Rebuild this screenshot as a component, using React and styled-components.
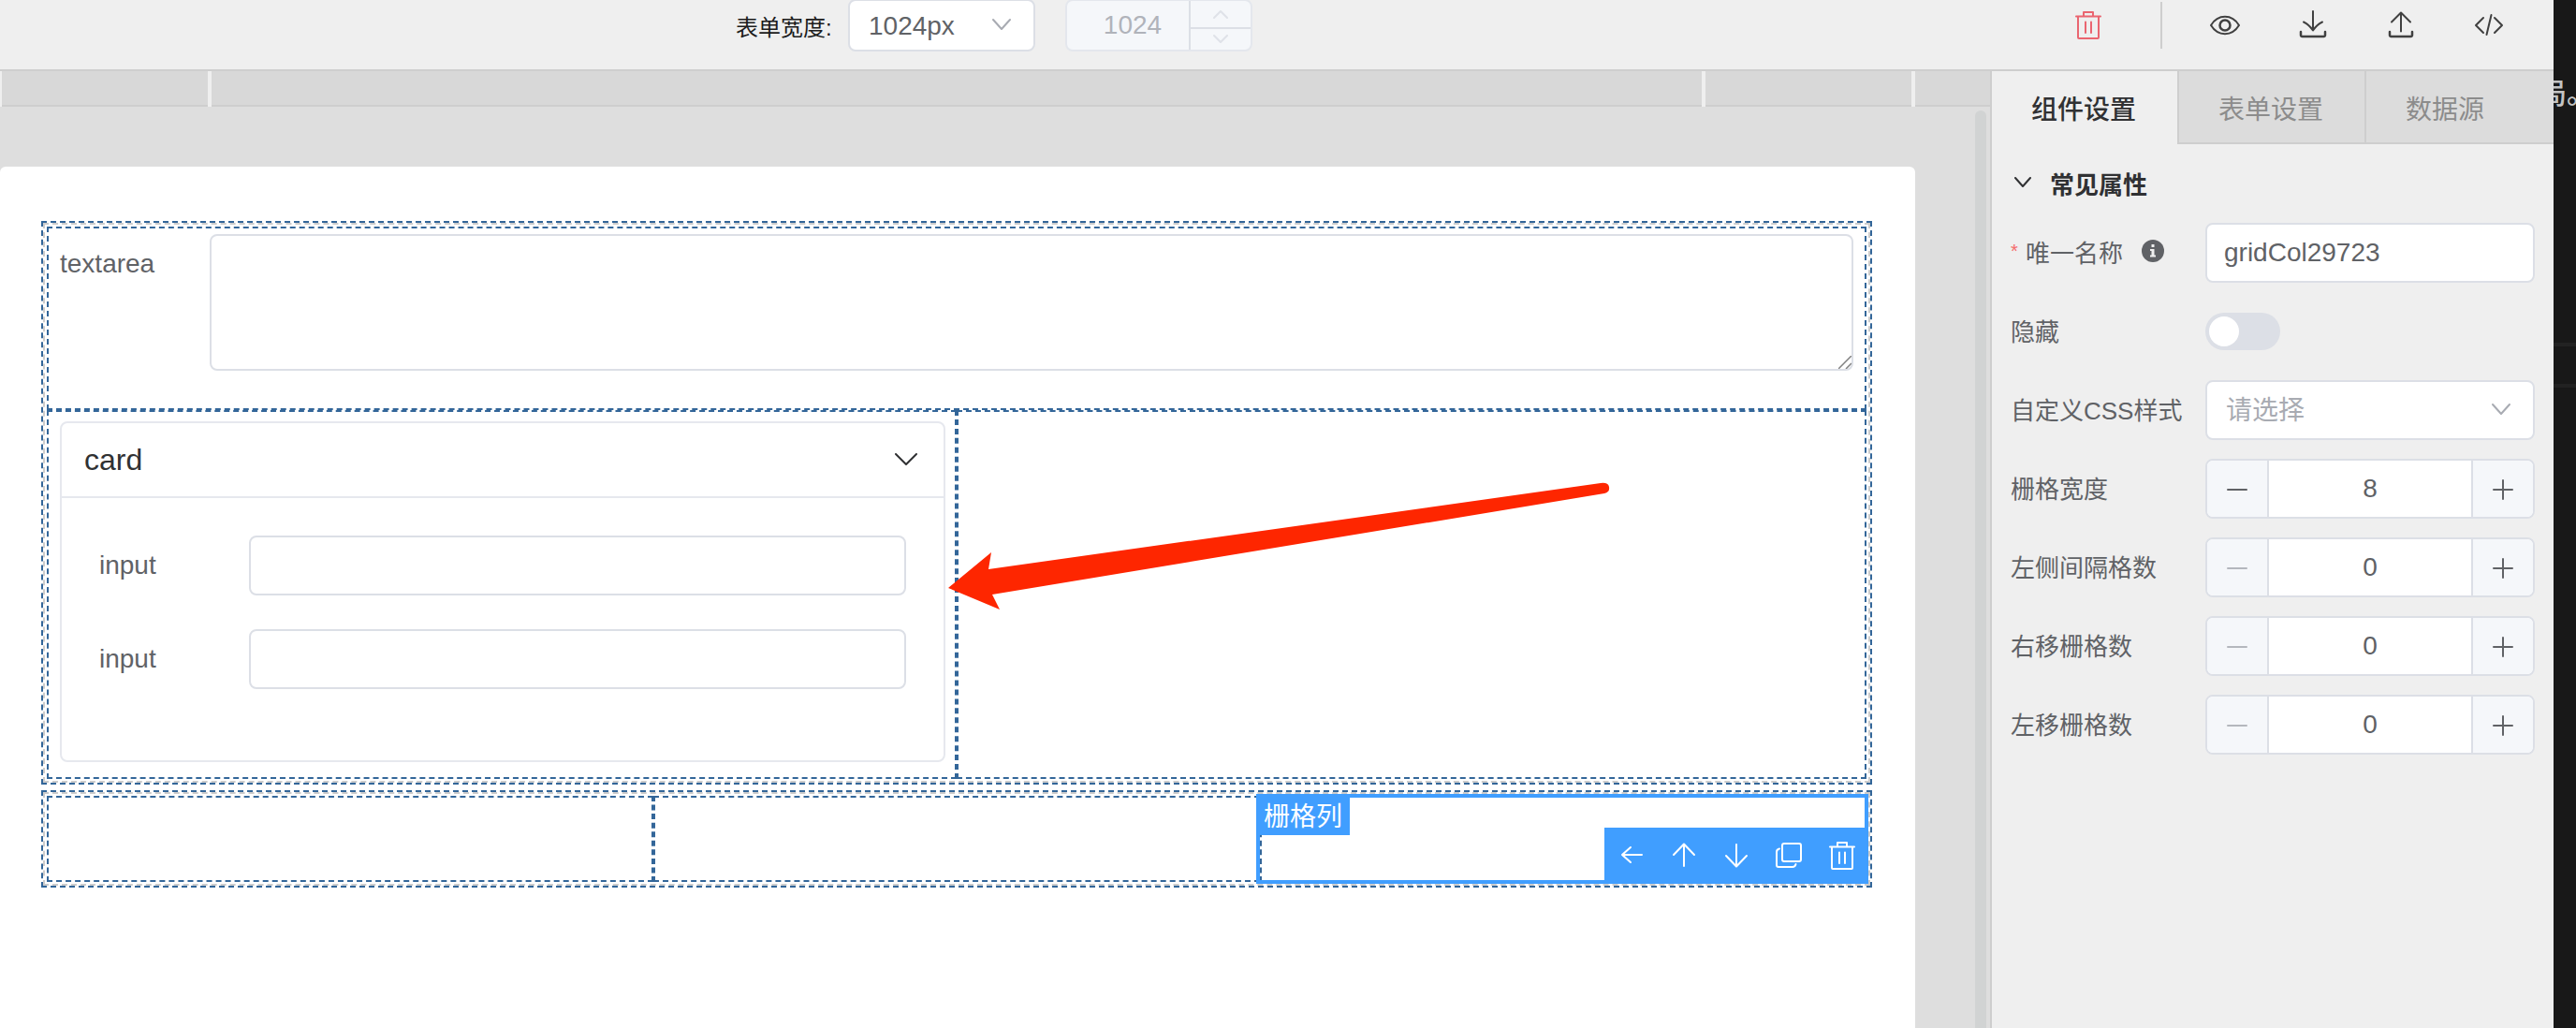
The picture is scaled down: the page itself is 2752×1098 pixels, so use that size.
import React, { useState } from "react";
import styled, { createGlobalStyle, css } from "styled-components";

const GlobalStyle = createGlobalStyle`
  *, *::before, *::after { box-sizing: border-box; }
  body {
    margin: 0;
    background: #181818;
    font-family: "Liberation Sans", "Noto Sans CJK SC", sans-serif;
    font-size: 28px;
    color: #606266;
  }
  button, input, select, textarea { font: inherit; color: inherit; margin: 0; }
  button { padding: 0; border: 0; background: none; cursor: pointer; }
`;

const Page = styled.div`
  display: flex;
  min-height: 100vh;
  overflow: hidden;
`;

const Designer = styled.div`
  flex: 1;
  min-width: 0;
  display: flex;
  flex-direction: column;
  background: #efefef;
`;

const Backdrop = styled.aside`
  flex: 0 0 24px;
  overflow: hidden;
  background: #181818;
  color: #c4c4c4;
  padding-top: 80px;
`;

const BackdropText = styled.p`
  margin: 0 0 246px -16px;
  font-size: 30px;
  font-weight: 500;
  line-height: 40px;
  white-space: nowrap;
`;

const BackdropLines = styled.div`
  height: 48px;
  border: solid #222222;
  border-width: 4px 0;
`;

const Toolbar = styled.header`
  display: flex;
  align-items: center;
  justify-content: space-between;
  height: 76px;
  padding: 0 52px 20px 786px;
  border-bottom: 2px solid #cecece;
`;

const WidthTools = styled.div`
  display: flex;
  align-items: center;
`;

const WidthLabel = styled.label`
  width: 120px;
  font-size: 24px;
  color: #1c1c1c;
  white-space: nowrap;
`;

const SelectBox = styled.div`
  position: relative;
  width: ${(p) => p.$width};
  height: ${(p) => p.$height};
  color: #a8abb2;
`;

const Select = styled.select`
  appearance: none;
  width: 100%;
  height: 100%;
  padding: 0 56px 0 20px;
  border: 2px solid #dcdfe6;
  border-radius: 8px;
  background: #ffffff;
  color: ${(p) => (p.$empty ? "#a8abb2" : "#606266")};
`;

const SelectArrow = styled.svg`
  position: absolute;
  top: 50%;
  right: 26px;
  margin-top: -8px;
  width: 20px;
  height: 14px;
  pointer-events: none;
`;

const DisabledNumber = styled.div`
  display: grid;
  grid-template-columns: 1fr 66px;
  width: 200px;
  height: 56px;
  margin-left: 32px;
  border: 2px solid #e4e7ed;
  border-radius: 8px;
  overflow: hidden;
  background: #f5f7fa;
`;

const DisabledInput = styled.input`
  width: 100%;
  padding: 0 0 0 10px;
  border: 0;
  background: transparent;
  text-align: center;
  &:disabled { color: #b0b3ba; }
`;

const Spinner = styled.div`
  display: grid;
  grid-template-rows: 28px 1fr;
  border-left: 2px solid #dcdfe6;
`;

const SpinButton = styled.button`
  display: flex;
  align-items: center;
  justify-content: center;
  color: #dfe2e8;
  & + & { border-top: 2px solid #dcdfe6; }
`;

const Actions = styled.div`
  display: flex;
  align-items: center;
  gap: 60px;
`;

const ActionButton = styled.button`
  display: flex;
  align-items: center;
  justify-content: center;
  width: 34px;
  height: 34px;
  color: ${(p) => (p.$danger ? "#ea6570" : "#404040")};
`;

const Separator = styled.span`
  width: 2px;
  height: 50px;
  background: #cecece;
  margin: 0 -10px 0 0;
`;

const Workspace = styled.div`
  flex: 1;
  display: grid;
  grid-template-columns: minmax(0, 1fr) 602px;
`;

const Canvas = styled.main`
  display: flex;
  flex-direction: column;
  background: #dedede;
`;

const Ruler = styled.div`
  display: grid;
  grid-template-columns: 222fr 1596fr 224fr 84fr;
  height: 38px;
`;

const RulerPart = styled.div`
  border-left: ${(p) => p.$tick} solid #efefef;
  background: #d8d8d8;
  box-shadow: inset 0 -2px #cecece;
`;

const Scroller = styled.div`
  flex: 1;
  display: flex;
`;

const Paper = styled.div`
  flex: 1;
  min-width: 0;
  display: flex;
  flex-direction: column;
  gap: 10px;
  margin: 64px 64px 0 0;
  padding: 60px 48px 60px 46px;
  border-radius: 6px 6px 0 0;
  background: #ffffff;
`;

const ScrollThumb = styled.div`
  width: 12px;
  margin: 4px 4px 0 0;
  border-radius: 6px 6px 0 0;
  background: #d1d3d3;
`;

const GridWidget = styled.section`
  padding: 2px;
  border: 2px dashed #cccccc;
  outline: 2px dashed #336699;
`;

const GridRow = styled.div`
  display: grid;
  grid-template-columns: repeat(${(p) => p.$cols}, minmax(0, 1fr));
`;

const Cell = styled.div`
  position: relative;
  min-height: 92px;
  padding: ${(p) => p.$pad || "0"};
  border: 2px dashed #336699;
`;

const FieldRow = styled.div`
  display: grid;
  grid-template-columns: 160px minmax(0, 1fr);
`;

const FieldLabel = styled.label`
  line-height: 64px;
`;

const fieldBorder = css`
  display: block;
  width: 100%;
  border: 2px solid #dcdfe6;
  border-radius: 8px;
  background: #ffffff;
  outline: none;
`;

const TextareaBox = styled.div`
  position: relative;
`;

const Textarea = styled.textarea`
  ${fieldBorder}
  height: 146px;
  padding: 10px 20px;
  resize: none;
`;

const ResizeGrip = styled.svg`
  position: absolute;
  right: 2px;
  bottom: 2px;
  width: 14px;
  height: 14px;
  pointer-events: none;
`;

const TextInput = styled.input`
  ${fieldBorder}
  height: 64px;
  padding: 0 18px;
`;

const Card = styled.article`
  border: 2px solid #e6e8ee;
  border-radius: 8px;
`;

const CardHeader = styled.header`
  display: flex;
  align-items: center;
  justify-content: space-between;
  height: 80px;
  padding: 0 28px 0 24px;
  border-bottom: 2px solid #e6e8ee;
`;

const CardTitle = styled.h2`
  margin: 0;
  font-size: 32px;
  font-weight: 400;
  color: #303133;
`;

const CardToggle = styled.button`
  display: flex;
  color: #303133;
`;

const CardBody = styled.div`
  display: flex;
  flex-direction: column;
  gap: 36px;
  padding: 40px 40px 76px;
`;

const Pointer = styled.svg`
  position: absolute;
  z-index: 2;
  left: -14px;
  top: 70px;
  width: 720px;
  height: 150px;
  pointer-events: none;
`;

const Selection = styled.div`
  position: absolute;
  z-index: 1;
  inset: -4px -4px -4px -6px;
  border: 4px solid #409eff;
`;

const SelectionTag = styled.span`
  position: absolute;
  top: -4px;
  left: -4px;
  height: 44px;
  padding: 0 8px;
  line-height: 50px;
  background: #409eff;
  color: #ffffff;
`;

const SelectionBar = styled.div`
  position: absolute;
  right: -4px;
  bottom: -4px;
  display: flex;
  height: 60px;
  padding-left: 2px;
  background: #409eff;
`;

const SelectionButton = styled.button`
  display: flex;
  align-items: center;
  justify-content: center;
  width: 56px;
  color: #ffffff;
`;

const Panel = styled.aside`
  border-left: 2px solid #cecece;
`;

const Tabs = styled.div`
  display: flex;
  height: 78px;
`;

const Tab = styled.button`
  padding: 0 44px 0 42px;
  white-space: nowrap;
  ${(p) =>
    p.$active
      ? css`
          color: #303133;
          font-weight: 500;
        `
      : css`
          background: #dcdcdc;
          color: #8c8c8c;
          box-shadow: inset 2px -2px #cecece;
          padding-left: 44px;
        `}
  &:last-child { flex: 1; text-align: left; }
`;

const Group = styled.div`
  padding: 16px 20px;
`;

const GroupTitle = styled.button`
  display: flex;
  align-items: center;
  gap: 20px;
  height: 50px;
  margin-bottom: 18px;
  padding-left: 4px;
  font-size: 26px;
  font-weight: 700;
  color: #303133;
`;

const Settings = styled.div`
  display: grid;
  gap: 20px;
`;

const Setting = styled.div`
  display: grid;
  grid-template-columns: 208px minmax(0, 1fr);
  align-items: center;
  height: 64px;
`;

const SettingLabel = styled.label`
  display: flex;
  align-items: center;
  padding-bottom: 4px;
  font-size: 26px;
  white-space: nowrap;
`;

const Star = styled.span`
  width: 16px;
  font-size: 20px;
  color: #f56c6c;
`;

const InfoMark = styled.svg`
  width: 24px;
  height: 24px;
  margin-left: 20px;
`;

const Switch = styled.input`
  appearance: none;
  display: block;
  width: 80px;
  height: 40px;
  padding: 4px;
  border-radius: 20px;
  background: ${(p) => (p.checked ? "#409eff" : "#dcdfe6")};
  &::before {
    content: "";
    display: block;
    width: 32px;
    height: 32px;
    margin-left: ${(p) => (p.checked ? "40px" : "0")};
    border-radius: 50%;
    background: #ffffff;
  }
`;

const Stepper = styled.div`
  display: grid;
  grid-template-columns: 66px minmax(0, 1fr) 66px;
  height: 64px;
  border: 2px solid #dcdfe6;
  border-radius: 8px;
  overflow: hidden;
  background: #ffffff;
`;

const StepButton = styled.button`
  display: flex;
  align-items: center;
  justify-content: center;
  background: #f5f7fa;
  color: #606266;
  &:first-child { border-right: 2px solid #dcdfe6; }
  &:last-child { border-left: 2px solid #dcdfe6; }
  &:disabled { color: #b4b7bd; }
`;

const StepInput = styled.input`
  width: 100%;
  border: 0;
  padding: 0;
  text-align: center;
  outline: none;
`;

function Icon({ w = 32, h = 32, stroke = 2, children }) {
  return (
    <svg
      width={w}
      height={h}
      viewBox={`0 0 ${w} ${h}`}
      fill="none"
      stroke="currentColor"
      strokeWidth={stroke}
      strokeLinecap="round"
      strokeLinejoin="round"
      aria-hidden="true"
    >
      {children}
    </svg>
  );
}

const TrashIcon = () => (
  <Icon>
    <path d="M3 6.5H29M11 6V2H21V6M5 7V29a1 1 0 0 0 1 1H26a1 1 0 0 0 1-1V7M13 12.5V24M19 12.5V24" />
  </Icon>
);

const EyeIcon = () => (
  <Icon>
    <path d="M1 16C5 9.5 10 6.800 16 6.800S27 9.500 31 16C27 22.500 22 25.200 16 25.200S5 22.500 1 16Z" />
    <circle cx="16" cy="16" r="5.500" strokeWidth="2.500" />
  </Icon>
);

const DownloadIcon = () => (
  <Icon>
    <path d="M16 1V21M6 12.500C10 14.500 14 18.500 16 21.500C18 18.500 22 14.500 26 12.500" />
    <path d="M3 23V26.500a1.500 1.500 0 0 0 1.500 1.500H27.500a1.500 1.500 0 0 0 1.500-1.500V23" strokeWidth="2.500" />
  </Icon>
);

const UploadIcon = () => (
  <Icon>
    <path d="M16 22.500V3M6 12.500L16 2.500L26 12.500" />
    <path d="M4 23V26.500a1.500 1.500 0 0 0 1.500 1.500H26.500a1.500 1.500 0 0 0 1.500-1.500V23" strokeWidth="2.500" />
  </Icon>
);

const CodeIcon = () => (
  <Icon>
    <path d="M10 8L2 16L10 24M22 8L30 16L22 24M18.500 5L13.500 26" />
  </Icon>
);

const LeftIcon = () => (
  <Icon>
    <path d="M26 15H5M14 7L5 15L14 23" />
  </Icon>
);

const UpIcon = () => (
  <Icon>
    <path d="M15 27V4M4 15L15 3.500L26 15" />
  </Icon>
);

const DownIcon = () => (
  <Icon>
    <path d="M15 4V27M4 16L15 27.500L26 16" />
  </Icon>
);

const CopyIcon = () => (
  <Icon>
    <rect x="8" y="3" width="20" height="19" rx="2" />
    <path d="M5 8.500C3 9 2 10 2 12V26a2 2 0 0 0 2 2H19C21 28 22 27 22.500 25" />
  </Icon>
);

const Chevron = ({ w, h, up }) => (
  <Icon w={w} h={h}>
    <path d={up ? `M1 ${h - 1}L${w / 2} 2L${w - 1} ${h - 1}` : `M1 1L${w / 2} ${h - 2}L${w - 1} 1`} />
  </Icon>
);

function DropArrow() {
  return (
    <SelectArrow
      viewBox="0 0 20 14"
      fill="none"
      stroke="currentColor"
      strokeWidth="2"
      strokeLinecap="round"
      strokeLinejoin="round"
      aria-hidden="true"
    >
      <path d="M1 2L10 12L19 2" />
    </SelectArrow>
  );
}

const tools = [
  { name: "预览", icon: EyeIcon },
  { name: "导入", icon: DownloadIcon },
  { name: "导出", icon: UploadIcon },
  { name: "代码", icon: CodeIcon },
];

const columnActions = [
  { name: "选中父组件", icon: LeftIcon },
  { name: "上移", icon: UpIcon },
  { name: "下移", icon: DownIcon },
  { name: "复制", icon: CopyIcon },
  { name: "删除", icon: TrashIcon },
];

const steps = [
  { id: "span", label: "栅格宽度", value: 8 },
  { id: "offset", label: "左侧间隔格数", value: 0 },
  { id: "push", label: "右移栅格数", value: 0 },
  { id: "pull", label: "左移栅格数", value: 0 },
];

function NumberStepper({ id, label, value }) {
  const [current, setCurrent] = useState(value);
  return (
    <Setting>
      <SettingLabel htmlFor={id}>{label}</SettingLabel>
      <Stepper>
        <StepButton
          type="button"
          aria-label="减少"
          disabled={current === 0}
          onClick={() => setCurrent(current - 1)}
        >
          <Icon w={24} h={24}>
            <path d="M2 13H22" />
          </Icon>
        </StepButton>
        <StepInput
          id={id}
          value={current}
          onChange={(e) => setCurrent(Number(e.target.value) || 0)}
        />
        <StepButton type="button" aria-label="增加" onClick={() => setCurrent(current + 1)}>
          <Icon w={24} h={24}>
            <path d="M2 13H22M12 3V23" />
          </Icon>
        </StepButton>
      </Stepper>
    </Setting>
  );
}

function TopBar() {
  return (
    <Toolbar>
      <WidthTools>
        <WidthLabel htmlFor="form-width">表单宽度:</WidthLabel>
        <SelectBox $width="200px" $height="56px">
          <Select id="form-width" defaultValue="1024px">
            <option>1024px</option>
          </Select>
          <DropArrow />
        </SelectBox>
        <DisabledNumber>
          <DisabledInput aria-label="自定义宽度" value="1024" disabled readOnly />
          <Spinner>
            <SpinButton type="button" aria-label="增加" disabled>
              <Chevron w={16} h={10} up />
            </SpinButton>
            <SpinButton type="button" aria-label="减少" disabled>
              <Chevron w={16} h={10} />
            </SpinButton>
          </Spinner>
        </DisabledNumber>
      </WidthTools>
      <Actions>
        <ActionButton type="button" aria-label="清空" $danger>
          <TrashIcon />
        </ActionButton>
        <Separator />
        {tools.map(({ name, icon: ToolIcon }) => (
          <ActionButton type="button" key={name} aria-label={name}>
            <ToolIcon />
          </ActionButton>
        ))}
      </Actions>
    </Toolbar>
  );
}

function FormCard() {
  return (
    <Card>
      <CardHeader>
        <CardTitle>card</CardTitle>
        <CardToggle type="button" aria-label="折叠">
          <Icon w={24} h={14}>
            <path d="M1 1L12 12L23 1" />
          </Icon>
        </CardToggle>
      </CardHeader>
      <CardBody>
        <FieldRow>
          <FieldLabel htmlFor="input-1">input</FieldLabel>
          <TextInput id="input-1" />
        </FieldRow>
        <FieldRow>
          <FieldLabel htmlFor="input-2">input</FieldLabel>
          <TextInput id="input-2" />
        </FieldRow>
      </CardBody>
    </Card>
  );
}

function FormCanvas() {
  return (
    <Canvas>
      <Ruler>
        <RulerPart $tick="2px" />
        <RulerPart $tick="4px" />
        <RulerPart $tick="4px" />
        <RulerPart $tick="4px" />
      </Ruler>
      <Scroller>
        <Paper>
          <GridWidget>
            <GridRow $cols={1}>
              <Cell $pad="6px 12px 40px">
                <FieldRow>
                  <FieldLabel htmlFor="textarea-1">textarea</FieldLabel>
                  <TextareaBox>
                    <Textarea id="textarea-1" />
                    <ResizeGrip viewBox="0 0 14 14" stroke="#808080" strokeWidth="1.5" aria-hidden="true">
                      <path d="M0 14L14 0M8 14L14 8" />
                    </ResizeGrip>
                  </TextareaBox>
                </FieldRow>
              </Cell>
            </GridRow>
            <GridRow $cols={2}>
              <Cell $pad="10px 10px 16px 12px">
                <FormCard />
              </Cell>
              <Cell>
                <Pointer viewBox="0 0 720 150" fill="#fe2600" aria-hidden="true">
                  <path d="M3 118L49 80L46 98L700 6Q708 5 709 10Q710 16 704 17L50 125L58 141Z" />
                </Pointer>
              </Cell>
            </GridRow>
          </GridWidget>
          <GridWidget>
            <GridRow $cols={3}>
              <Cell />
              <Cell />
              <Cell>
                <Selection>
                  <SelectionTag>栅格列</SelectionTag>
                  <SelectionBar>
                    {columnActions.map(({ name, icon: ActionIcon }) => (
                      <SelectionButton type="button" key={name} aria-label={name}>
                        <ActionIcon />
                      </SelectionButton>
                    ))}
                  </SelectionBar>
                </Selection>
              </Cell>
            </GridRow>
          </GridWidget>
        </Paper>
        <ScrollThumb />
      </Scroller>
    </Canvas>
  );
}

function SettingPanel() {
  const [hidden, setHidden] = useState(false);
  return (
    <Panel>
      <Tabs role="tablist">
        <Tab type="button" role="tab" aria-selected="true" $active>
          组件设置
        </Tab>
        <Tab type="button" role="tab" aria-selected="false">
          表单设置
        </Tab>
        <Tab type="button" role="tab" aria-selected="false">
          数据源
        </Tab>
      </Tabs>
      <Group>
        <GroupTitle type="button">
          <Chevron w={18} h={12} />
          常见属性
        </GroupTitle>
        <Settings>
          <Setting>
            <SettingLabel htmlFor="unique-name">
              <Star>*</Star>
              唯一名称
              <InfoMark viewBox="0 0 24 24" aria-hidden="true">
                <circle cx="12" cy="12" r="12" fill="#606266" />
                <path d="M10.500 5H13.500V8H10.500ZM9 10H13.500V16.500H15V18.500H9V16.500H10.500V12H9Z" fill="#efefef" />
              </InfoMark>
            </SettingLabel>
            <TextInput id="unique-name" defaultValue="gridCol29723" />
          </Setting>
          <Setting>
            <SettingLabel htmlFor="hidden">隐藏</SettingLabel>
            <Switch
              id="hidden"
              type="checkbox"
              role="switch"
              checked={hidden}
              onChange={(e) => setHidden(e.target.checked)}
            />
          </Setting>
          <Setting>
            <SettingLabel htmlFor="custom-class">自定义CSS样式</SettingLabel>
            <SelectBox $width="100%" $height="64px">
              <Select id="custom-class" defaultValue="" $empty>
                <option value="">请选择</option>
              </Select>
              <DropArrow />
            </SelectBox>
          </Setting>
          {steps.map((s) => (
            <NumberStepper key={s.id} {...s} />
          ))}
        </Settings>
      </Group>
    </Panel>
  );
}

export default function App() {
  return (
    <Page>
      <GlobalStyle />
      <Designer>
        <TopBar />
        <Workspace>
          <FormCanvas />
          <SettingPanel />
        </Workspace>
      </Designer>
      <Backdrop>
        <BackdropText>局。</BackdropText>
        <BackdropLines />
      </Backdrop>
    </Page>
  );
}
